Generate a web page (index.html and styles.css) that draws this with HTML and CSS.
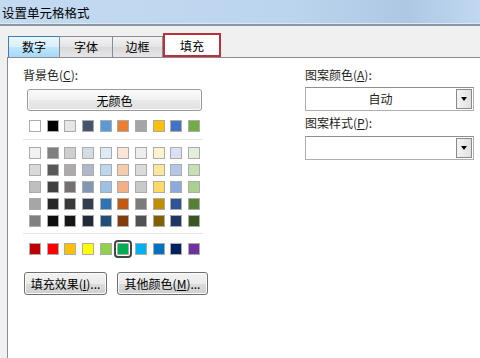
FILE: index.html
```html
<!DOCTYPE html>
<html lang="zh-CN">
<head>
    <meta charset="UTF-8">
    <title>设置单元格格式</title>
    <link rel="stylesheet" href="styles.css">
</head>
<body>
    <div class="titlebar">设置单元格格式</div>

    <div class="tabs">
        <div class="tab tab-hover">数字</div>
        <div class="tab tab-font">字体</div>
        <div class="tab tab-border">边框</div>
        <div class="tab tab-active">填充</div>
    </div>

    <div class="panel">
        <div class="left-col">
            <div class="label">背景色(<u>C</u>):</div>
            <button class="btn no-color">无颜色</button>
            <div class="swatch-row" id="themeRow"></div>
            <div class="sep"></div>
            <div class="swatch-grid" id="tintGrid"></div>
            <div class="sep sep-short"></div>
            <div class="swatch-row std-row" id="stdRow"></div>
            <div class="btn-row">
                <button class="btn btn-effect">填充效果(<u>I</u>)...</button>
                <button class="btn btn-more">其他颜色(<u>M</u>)...</button>
            </div>
        </div>

        <div class="right-col">
            <div class="label">图案颜色(<u>A</u>):</div>
            <div class="combo">
                <div class="combo-text">自动</div>
                <div class="combo-arrow"><span class="tri"></span></div>
            </div>
            <div class="label label-2">图案样式(<u>P</u>):</div>
            <div class="combo combo-2">
                <div class="combo-text"></div>
                <div class="combo-arrow"><span class="tri"></span></div>
            </div>
        </div>
    </div>

    <script>
        // Office theme colours
        var theme = ['#ffffff', '#000000', '#e7e6e6', '#44546a', '#5b9bd5',
                     '#ed7d31', '#a5a5a5', '#ffc000', '#4472c4', '#70ad47'];

        // tints / shades, one row per level
        var tints = [
            ['#f2f2f2', '#7f7f7f', '#d0cece', '#d6dce4', '#ddebf7', '#fce4d6', '#ededed', '#fff2cc', '#d9e1f2', '#e2efda'],
            ['#d9d9d9', '#595959', '#aeaaaa', '#adb9ca', '#bdd7ee', '#f8cbad', '#dbdbdb', '#ffe699', '#b4c6e7', '#c6e0b4'],
            ['#bfbfbf', '#404040', '#757171', '#8497b0', '#9bc2e6', '#f4b084', '#c9c9c9', '#ffd966', '#8ea9db', '#a9d08e'],
            ['#a6a6a6', '#262626', '#3a3838', '#333f4f', '#2f75b5', '#c65911', '#7b7b7b', '#bf8f00', '#305496', '#548235'],
            ['#808080', '#0d0d0d', '#171616', '#222b35', '#1f4e78', '#833c0c', '#525252', '#806000', '#203764', '#375623']
        ];

        var standard = ['#c00000', '#ff0000', '#ffc000', '#ffff00', '#92d050',
                        '#00b050', '#00b0f0', '#0070c0', '#002060', '#7030a0'];

        function swatches(colors, selected) {
            return colors.map(function (c, i) {
                var cls = i === selected ? 'swatch selected' : 'swatch';
                return '<span class="' + cls + '" style="background:' + c + '"></span>';
            }).join('');
        }

        document.getElementById('themeRow').innerHTML = swatches(theme, -1);
        document.getElementById('tintGrid').innerHTML = tints.map(function (row) {
            return swatches(row, -1);
        }).join('');
        document.getElementById('stdRow').innerHTML = swatches(standard, 5);
    </script>
</body>
</html>
```

FILE: styles.css
```css
body {
    margin: 0;
    width: 480px;
    height: 358px;
    overflow: hidden;
    font-family: "Noto Sans CJK SC", "Liberation Sans", sans-serif;
    font-size: 12px;
    color: #000;
    background-color: #f0f0f0;
}
.titlebar {
    height: 22px;
    padding: 2px 0 0 2px;
    line-height: 22px;
    font-size: 12.5px;
    background: linear-gradient(90deg, #c3daf1 0%, #bcd5ee 60%, #aec8e4 85%, #c0d8f0 100%);
    border-bottom: 2px solid #8a96a3;
    box-shadow: inset 0 -1px #dce8f4;
}
.tabs {
    display: flex;
    align-items: flex-end;
    height: 31px;
    padding-left: 8px;
}
.tab {
    box-sizing: border-box;
    height: 21px;
    line-height: 19px;
    text-align: center;
    border: 1px solid #898c95;
    border-bottom: none;
    background: linear-gradient(#f3f3f3, #e4e4e4 50%, #d9d9d9 51%, #e6e6e6);
}
.tab-hover {
    width: 52px;
    background: linear-gradient(#eaf6fd, #d9f0fc 50%, #bee6fd 51%, #a7d9f5);
    border-color: #3c7fb1;
}
.tab-font {
    width: 54px;
    margin-left: -1px;
}
.tab-border {
    width: 51px;
    margin-left: -1px;
}
.tab-active {
    width: 58px;
    height: 24px;
    line-height: 21px;
    background-color: #fff;
    background-image: none;
    border: 2px solid #b8323b;
}
.panel {
    display: flex;
    height: 300px;
    margin-left: 7px;
    background-color: #fff;
    border-left: 1px solid #898c95;
    border-top: 1px solid #898c95;
}
.left-col {
    box-sizing: border-box;
    width: 200px;
    flex: none;
    padding: 9px 0 0 15px;
}
.label {
    height: 16px;
    line-height: 16px;
    color: #1e1e1e;
}
.btn {
    box-sizing: border-box;
    display: block;
    height: 23px;
    padding: 0;
    font-family: inherit;
    font-size: 12px;
    color: #000;
    border: 1px solid #707070;
    border-radius: 3px;
    background: linear-gradient(#f2f2f2, #ebebeb 50%, #dddddd 51%, #cfcfcf);
    box-shadow: inset 0 0 0 1px #fbfbfb;
}
.no-color {
    width: 175px;
    height: 22px;
    margin: 6px 0 0 4px;
    border-color: #9a9a9a;
    background: linear-gradient(#fbfbfb, #f0f0f0 50%, #e8e8e8 51%, #e2e2e2);
}
.swatch-row {
    display: flex;
    justify-content: space-between;
    width: 171px;
    margin: 9px 0 0 6px;
}
.swatch {
    box-sizing: border-box;
    display: block;
    width: 12px;
    height: 12px;
    border: 1px solid #ababab;
}
.swatch.selected {
    outline: 2px solid #404a44;
    outline-offset: 1px;
    border-radius: 1px;
}
.sep {
    width: 180px;
    height: 1px;
    margin-top: 7px;
    background-color: #e3e3e3;
}
.sep-short {
    margin-top: 6px;
}
.swatch-grid {
    display: grid;
    grid-template-columns: repeat(10, 12px);
    justify-content: space-between;
    row-gap: 5px;
    width: 171px;
    margin: 7px 0 0 6px;
}
.std-row {
    margin-top: 9px;
}
.btn-row {
    display: flex;
    gap: 10px;
    margin: 17px 0 0 1px;
}
.btn-effect {
    width: 84px;
}
.btn-more {
    width: 92px;
}
.right-col {
    width: 169px;
    margin-left: 97px;
    padding-top: 9px;
}
.combo {
    box-sizing: border-box;
    display: flex;
    height: 24px;
    margin-top: 4px;
    border: 1px solid #abadb3;
    border-top-color: #8e8f8f;
}
.combo-2 {
    margin-top: 5px;
}
.combo-text {
    flex: 1;
    line-height: 22px;
    text-align: center;
    color: #222;
}
.combo-arrow {
    box-sizing: border-box;
    display: flex;
    align-items: center;
    justify-content: center;
    width: 16px;
    margin: 1px;
    border: 1px solid #8a8a8a;
    background: linear-gradient(90deg, #f4f4f4, #e0e0e0);
}
.tri {
    width: 0;
    height: 0;
    border-left: 3.5px solid transparent;
    border-right: 3.5px solid transparent;
    border-top: 4px solid #000;
}
.label-2 {
    margin-top: 4px;
}
```
